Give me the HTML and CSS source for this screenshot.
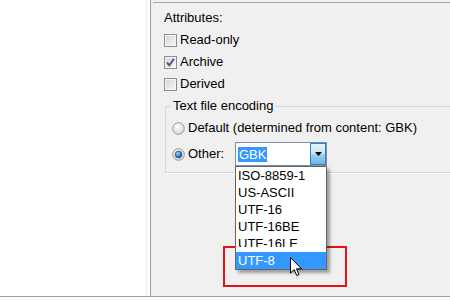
FILE: index.html
```html
<!DOCTYPE html>
<html lang="en">
<head>
	<meta charset="UTF-8">
	<title>Resource Properties</title>
	<link rel="stylesheet" href="styles.css">
</head>
<body>
	<div class="main">
		<div class="side"></div>
		<div class="pane">
			<div class="pane-top"></div>
			<div class="content">
				<div class="title">Attributes:</div>
				<div class="row">
					<span class="check"></span>
					<span>Read-only</span>
				</div>
				<div class="row">
					<span class="check">
						<svg width="11" height="11" viewBox="0 0 11 11"><path d="M2 5.5 L4.3 8.3 L9 1.8" fill="none" stroke="#4b5d94" stroke-width="2"/></svg>
					</span>
					<span>Archive</span>
				</div>
				<div class="row">
					<span class="check"></span>
					<span>Derived</span>
				</div>

				<fieldset class="group">
					<legend>Text file encoding</legend>
					<div class="opt">
						<svg class="radio" width="13" height="13" viewBox="0 0 13 13">
							<defs>
								<radialGradient id="rg1" cx="40%" cy="35%" r="70%">
									<stop offset="0" stop-color="#ffffff"/>
									<stop offset="1" stop-color="#d2d2d2"/>
								</radialGradient>
							</defs>
							<circle cx="6.5" cy="6.5" r="5.8" fill="url(#rg1)" stroke="#979797"/>
						</svg>
						<span>Default (determined from content: GBK)</span>
					</div>
					<div class="opt opt-other">
						<svg class="radio" width="13" height="13" viewBox="0 0 13 13">
							<defs>
								<radialGradient id="rg2" cx="40%" cy="35%" r="70%">
									<stop offset="0" stop-color="#ffffff"/>
									<stop offset="1" stop-color="#d2d2d2"/>
								</radialGradient>
								<radialGradient id="rg3" cx="40%" cy="35%" r="70%">
									<stop offset="0" stop-color="#9fd6fb"/>
									<stop offset="0.6" stop-color="#2a7fc6"/>
									<stop offset="1" stop-color="#14467c"/>
								</radialGradient>
							</defs>
							<circle cx="6.5" cy="6.5" r="5.8" fill="url(#rg2)" stroke="#979797"/>
							<circle cx="6.5" cy="6.5" r="3.4" fill="url(#rg3)" stroke="#1c4f86" stroke-width="0.6"/>
						</svg>
						<span class="opt-label">Other:</span>
						<div class="combo">
							<div class="combo-text"><span class="sel">GBK</span></div>
							<div class="combo-btn">
								<svg width="7" height="4" viewBox="0 0 7 4"><path d="M0 0 H7 L3.5 4 Z" fill="#000"/></svg>
							</div>
							<div class="list">
								<div class="item">ISO-8859-1</div>
								<div class="item">US-ASCII</div>
								<div class="item">UTF-16</div>
								<div class="item">UTF-16BE</div>
								<div class="item"><span class="clip">UTF-16LE</span></div>
								<div class="item active">UTF-8</div>
							</div>
						</div>
					</div>
				</fieldset>
			</div>
		</div>
	</div>
	<div class="status"></div>

	<div class="mark"></div>
	<svg class="cursor" width="13" height="20" viewBox="0 0 13 20">
		<path d="M0.5 0.5 L0.5 16 L4.2 12.6 L6.8 18.6 L9 17.6 L6.5 11.8 L11.5 11.8 Z" fill="#fff" stroke="#000" stroke-width="1" stroke-linejoin="miter"/>
	</svg>
</body>
</html>
```

FILE: styles.css
```css
body {
	margin: 0px;
	width: 450px;
	height: 300px;
	overflow: hidden;
	position: relative;
	background-color: #fff;
	font-family: "Liberation Sans", Arial, sans-serif;
	font-size: 13px;
	color: #000;
}
.main{
	display: flex;
	height: 296px;
}
.side{
	width: 146px;
	border-right: 1px solid #ececec;
	margin-right: 3px;
	background-color: #fff;
}
.pane{
	flex: 1;
	background-color: #f0f0f0;
	border-left: 1px solid #a0a0a0;
	overflow: hidden;
}
.pane-top{
	height: 2px;
	margin-left: 2px;
	border-bottom: 1px solid #a9a9a9;
}
.content{
	padding: 7px 0px 0px 13px;
}
.title{
	line-height: 16px;
	margin-bottom: 3px;
}
.row{
	display: flex;
	align-items: center;
	height: 22px;
	line-height: 16px;
}
.check{
	box-sizing: border-box;
	width: 13px;
	height: 13px;
	margin-right: 3px;
	border: 1px solid #8e8f8f;
	box-shadow: inset 0px 0px 0px 1px #f6f6f6;
	background: linear-gradient(135deg, #d4d4d4, #f8f8f8);
	display: flex;
	align-items: center;
	justify-content: center;
}
.group{
	margin: 3px -30px 0px 1px;
	padding: 3px 0px 5px 6px;
	border: 1px solid #d5d8dc;
	box-shadow: 1px 1px 0px #fff;
}
.group legend{
	margin-left: -1px;
	padding: 0px 2px;
	line-height: 16px;
}
.opt{
	display: flex;
	align-items: center;
	height: 22px;
	line-height: 16px;
}
.opt-other{
	height: 26px;
	margin-top: 2px;
}
.radio{
	margin-right: 3px;
	flex-shrink: 0;
}
.opt-label{
	width: 47px;
}
.combo{
	position: relative;
	box-sizing: border-box;
	width: 92px;
	height: 24px;
	border: 1px solid #7b8fa6;
	background-color: #fff;
	display: flex;
}
.combo-text{
	flex: 1;
	display: flex;
	align-items: center;
	padding-left: 2px;
}
.sel{
	background-color: #3399ff;
	color: #fff;
	line-height: 15px;
	padding: 0px 1px;
}
.combo-btn{
	box-sizing: border-box;
	width: 16px;
	border: 1px solid #3c7fb1;
	background: linear-gradient(#e4f3fd, #c4e5f8 50%, #9fd2f1 51%, #6ab7e6);
	display: flex;
	align-items: center;
	justify-content: center;
}
.list{
	position: absolute;
	left: -1px;
	top: 23px;
	z-index: 2;
	width: 90px;
	border: 1px solid #646464;
	background-color: #fff;
	box-shadow: 3px 3px 3px rgba(0,0,0,0.35);
}
.item{
	height: 17px;
	line-height: 17px;
	padding-left: 2px;
	white-space: nowrap;
	overflow: hidden;
}
.item .clip{
	display: block;
	height: 12px;
	overflow: hidden;
}
.item.active{
	background-color: #3399ff;
	color: #fff;
}
.status{
	height: 3px;
	border-top: 1px solid #a0a0a0;
	background-color: #fafafa;
}
.mark{
	position: absolute;
	left: 223px;
	top: 246px;
	width: 120px;
	height: 37px;
	border: 2px solid #e3141c;
	z-index: 1;
}
.cursor{
	position: absolute;
	left: 290px;
	top: 257px;
	z-index: 3;
}
```
